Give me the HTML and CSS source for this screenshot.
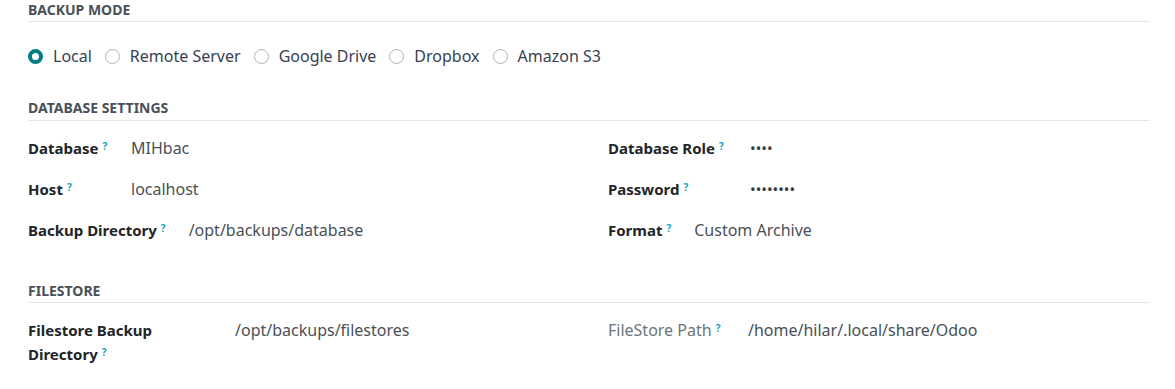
FILE: index.html
```html
<!DOCTYPE html>
<html lang="en">
<head>
    <meta charset="UTF-8">
    <title>Backup Settings</title>
    <link rel="stylesheet" href="styles.css">
</head>
<body>
    <div class="page">
        <div class="section">
            <div class="section-title">Backup Mode</div>
            <div class="radio-group">
                <label class="radio-item"><span class="radio checked"></span>Local</label>
                <label class="radio-item"><span class="radio"></span>Remote Server</label>
                <label class="radio-item"><span class="radio"></span>Google Drive</label>
                <label class="radio-item"><span class="radio"></span>Dropbox</label>
                <label class="radio-item"><span class="radio"></span>Amazon S3</label>
            </div>
        </div>

        <div class="section section-db">
            <div class="section-title">Database Settings</div>
            <div class="group-grid">
                <div class="group">
                    <div class="field">
                        <div class="field-label w-103">Database<sup>?</sup></div>
                        <div class="field-value">MIHbac</div>
                    </div>
                    <div class="field">
                        <div class="field-label w-103">Host<sup>?</sup></div>
                        <div class="field-value">localhost</div>
                    </div>
                    <div class="field">
                        <div class="field-label">Backup Directory<sup>?</sup></div>
                        <div class="field-value">/opt/backups/database</div>
                    </div>
                </div>
                <div class="group">
                    <div class="field">
                        <div class="field-label w-142">Database Role<sup>?</sup></div>
                        <div class="field-value dots">&bull;&bull;&bull;&bull;</div>
                    </div>
                    <div class="field">
                        <div class="field-label w-142">Password<sup>?</sup></div>
                        <div class="field-value dots">&bull;&bull;&bull;&bull;&bull;&bull;&bull;&bull;</div>
                    </div>
                    <div class="field">
                        <div class="field-label">Format<sup>?</sup></div>
                        <div class="field-value">Custom Archive</div>
                    </div>
                </div>
            </div>
        </div>

        <div class="section section-files">
            <div class="section-title">Filestore</div>
            <div class="group-grid">
                <div class="group">
                    <div class="field">
                        <div class="field-label w-207">Filestore Backup<br>Directory<sup>?</sup></div>
                        <div class="field-value">/opt/backups/filestores</div>
                    </div>
                </div>
                <div class="group">
                    <div class="field">
                        <div class="field-label w-140 muted">FileStore Path<sup>?</sup></div>
                        <div class="field-value">/home/hilar/.local/share/Odoo</div>
                    </div>
                </div>
            </div>
        </div>
    </div>
</body>
</html>
```

FILE: styles.css
```css
body {
    margin: 0;
    padding: 0;
    background: #fff;
    font-family: "Noto Sans", "Open Sans", Arial, sans-serif;
    font-size: 14px;
    color: #212529;
}

.page {
    padding: 0 26px 0 28px;
}

.section-title {
    font-size: 14px;
    font-weight: bold;
    text-transform: uppercase;
    color: #495057;
    line-height: 20px;
    padding-bottom: 1px;
    border-bottom: 1px solid #e3e5e8;
}

.section-db {
    margin-top: 30px;
}

.section-db .section-title {
    padding-bottom: 2px;
}

.section-files {
    margin-top: 39px;
}

.radio-group {
    display: flex;
    align-items: center;
    gap: 13px;
    margin-top: 22px;
    line-height: 24px;
    font-size: 16px;
    color: #374151;
}

.radio-item {
    display: flex;
    align-items: center;
    gap: 10px;
}

.radio {
    width: 15px;
    height: 15px;
    box-sizing: border-box;
    border: 1px solid #adb5bd;
    border-radius: 50%;
    background: #fff;
}

.radio.checked {
    border: 4px solid #017e84;
}

.group-grid {
    display: grid;
    grid-template-columns: 1fr 1fr;
    column-gap: 39px;
    margin-top: 15px;
}

.group {
    display: flex;
    flex-direction: column;
    gap: 17px;
}

.field {
    display: flex;
    line-height: 24px;
    font-size: 15px;
}

.field-label {
    font-weight: bold;
    color: #212529;
    padding-right: 23px;
    box-sizing: border-box;
    flex-shrink: 0;
}

.field-label sup {
    font-size: 10px;
    font-weight: bold;
    line-height: 0;
    color: #17a2b8;
    margin-left: 4px;
    vertical-align: 4px;
}

.field-label.muted {
    font-weight: normal;
    font-size: 16px;
    color: #6c757d;
}

.w-103 { width: 103px; }
.w-142 { width: 142px; }
.w-140 { width: 140px; }
.w-207 { width: 207px; }

.field-value {
    color: #495057;
    font-size: 16px;
}

.field-value.dots {
    color: #343a40;
    font-size: 15px;
}
```
